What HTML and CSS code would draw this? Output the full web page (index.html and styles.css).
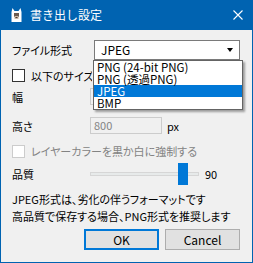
FILE: index.html
```html
<!DOCTYPE html>
<html lang="ja">
<head>
<meta charset="utf-8">
<title>書き出し設定</title>
<link rel="stylesheet" href="styles.css">
</head>
<body>
<div class="window">
  <div class="titlebar">
    <svg class="app-icon" width="11" height="14" viewBox="0 0 11 14">
      <path d="M1.5 0 L3.5 3 L7.5 3 L9.5 0 L10.5 4 L10.5 14 L0.5 14 L0.5 4 Z" fill="#ffffff"/>
      <rect x="3" y="5" width="5" height="4" fill="#6b5b50"/>
      <rect x="3.5" y="8" width="4" height="3" fill="#cdb9a6"/>
      <rect x="4.5" y="9" width="2" height="1" fill="#4a3b33"/>
    </svg>
    <span class="title">書き出し設定</span>
    <svg class="close" width="10" height="10" viewBox="0 0 10 10">
      <path d="M0.5 0.5 L9.5 9.5 M9.5 0.5 L0.5 9.5" stroke="#ffffff" stroke-width="1.1"/>
    </svg>
  </div>
  <div class="content">
    <div class="row row-format">
      <span class="label label-format">ファイル形式</span>
      <div class="combo">
        <span class="combo-value">JPEG</span>
        <span class="combo-arrow"></span>
        <ul class="combo-list">
          <li class="combo-item">PNG (24-bit PNG)</li>
          <li class="combo-item">PNG (透過PNG)</li>
          <li class="combo-item selected">JPEG</li>
          <li class="combo-item">BMP</li>
        </ul>
      </div>
    </div>
    <div class="row row-check-size">
      <span class="check"></span>
      <span class="check-text clipped">以下のサイズで書き出す</span>
    </div>
    <div class="row row-width">
      <span class="label">幅</span>
      <span class="field disabled"></span>
      <span class="unit">px</span>
    </div>
    <div class="row row-height">
      <span class="label">高さ</span>
      <span class="field disabled">800</span>
      <span class="unit">px</span>
    </div>
    <div class="row row-check-color">
      <span class="check disabled"></span>
      <span class="check-text disabled-text">レイヤーカラーを黒か白に強制する</span>
    </div>
    <div class="row row-quality">
      <span class="label">品質</span>
      <div class="slider" style="--value: 0.9">
        <span class="slider-track"></span>
        <span class="slider-thumb"></span>
      </div>
      <span class="slider-value">90</span>
    </div>
    <p class="note">JPEG形式は、劣化の伴うフォーマットです<br>高品質で保存する場合、PNG形式を推奨します</p>
    <div class="buttons">
      <button class="btn btn-default">OK</button>
      <button class="btn">Cancel</button>
    </div>
  </div>
</div>
</body>
</html>
```

FILE: styles.css
```css
* { box-sizing: border-box; }

html, body {
  margin: 0;
  padding: 0;
  background: #ffffff;
}

body {
  font-family: "Noto Sans CJK JP", sans-serif;
  font-size: 11px;
  color: #000000;
  font-feature-settings: "palt";
}

.window {
  width: 253px;
  height: 263px;
  display: flex;
  flex-direction: column;
  background: #0063b1;
  overflow: hidden;
}

.titlebar {
  height: 30px;
  flex: none;
  display: flex;
  align-items: center;
  padding-left: 11px;
  color: #ffffff;
}

.app-icon {
  flex: none;
  margin-right: 8px;
}

.title {
  font-size: 12px;
  line-height: 14px;
  font-feature-settings: normal;
}

.close {
  margin-left: auto;
  margin-right: 10px;
  flex: none;
}

.content {
  flex: 1;
  margin: 0 1px 1px 1px;
  background: #f0f0f0;
  padding: 10px 12px 0 11px;
  display: flex;
  flex-direction: column;
}

.row {
  display: flex;
  align-items: center;
  flex: none;
}

.label {
  width: 78px;
  flex: none;
  line-height: 14px;
}

.label-format {
  width: 82px;
}

.row-format {
  height: 20px;
}

.combo {
  position: relative;
  width: 149px;
  height: 20px;
  border: 1px solid #7a7a7a;
  background: #ffffff;
  display: flex;
  align-items: center;
  padding-left: 6px;
  font-size: 12px;
}

.combo-value {
  line-height: 14px;
}

.combo-arrow {
  margin-left: auto;
  margin-right: 6px;
  width: 0;
  height: 0;
  border-left: 3.5px solid transparent;
  border-right: 3.5px solid transparent;
  border-top: 4px solid #000000;
}

.combo-list {
  position: absolute;
  left: -2px;
  top: 19px;
  width: 150px;
  margin: 0;
  padding: 0;
  list-style: none;
  background: #ffffff;
  border: 1px solid #646464;
  box-shadow: 2px 2px 2px rgba(0, 0, 0, 0.35);
  z-index: 5;
}

.combo-item {
  height: 12px;
  line-height: 12px;
  padding-left: 3px;
  font-size: 11.5px;
}

.combo-item.selected {
  background: #0078d7;
  color: #ffffff;
}

.row-check-size {
  margin-top: 8px;
  height: 15px;
}

.check {
  width: 13px;
  height: 13px;
  flex: none;
  border: 1px solid #333333;
  background: #ffffff;
  margin-right: 6px;
}

.check.disabled {
  border-color: #cccccc;
}

.check-text {
  line-height: 14px;
  white-space: nowrap;
}

.check-text.clipped {
  width: 61px;
  overflow: hidden;
}

.disabled-text {
  color: #838383;
}

.row-width {
  margin-top: 5px;
  height: 17px;
}

.row-height {
  margin-top: 12px;
  height: 17px;
}

.field {
  width: 72px;
  height: 17px;
  flex: none;
  border: 1px solid #cccccc;
  background: #f0f0f0;
  color: #838383;
  padding-left: 3px;
  line-height: 15px;
  font-feature-settings: normal;
}

.unit {
  margin-left: 5px;
  line-height: 14px;
}

.row-check-color {
  margin-top: 10px;
  height: 14px;
}

.row-quality {
  margin-top: 5px;
  height: 22px;
}

.slider {
  position: relative;
  width: 109px;
  height: 22px;
  flex: none;
  display: flex;
  align-items: center;
}

.slider-track {
  width: 100%;
  height: 4px;
  background: #e7eaea;
  border: 1px solid #d6d6d6;
}

.slider-thumb {
  position: absolute;
  top: 0;
  left: calc(var(--value) * (100% - 10px) - 1px);
  width: 10px;
  height: 22px;
  background: #0078d7;
}

.slider-value {
  margin-left: 6px;
  line-height: 14px;
}

.note {
  margin: 6px 0 0 0;
  line-height: 17px;
  white-space: nowrap;
}

.buttons {
  margin-top: 4px;
  display: flex;
  justify-content: flex-end;
  gap: 6px;
}

.btn {
  width: 75px;
  height: 21px;
  margin: 0;
  padding: 0;
  border: 1px solid #adadad;
  background: #e1e1e1;
  font-family: "Noto Sans CJK JP", sans-serif;
  font-size: 12px;
  line-height: 17px;
  color: #000000;
}

.btn-default {
  border-color: #0078d7;
  box-shadow: inset 0 0 0 1px #0078d7;
}
```
